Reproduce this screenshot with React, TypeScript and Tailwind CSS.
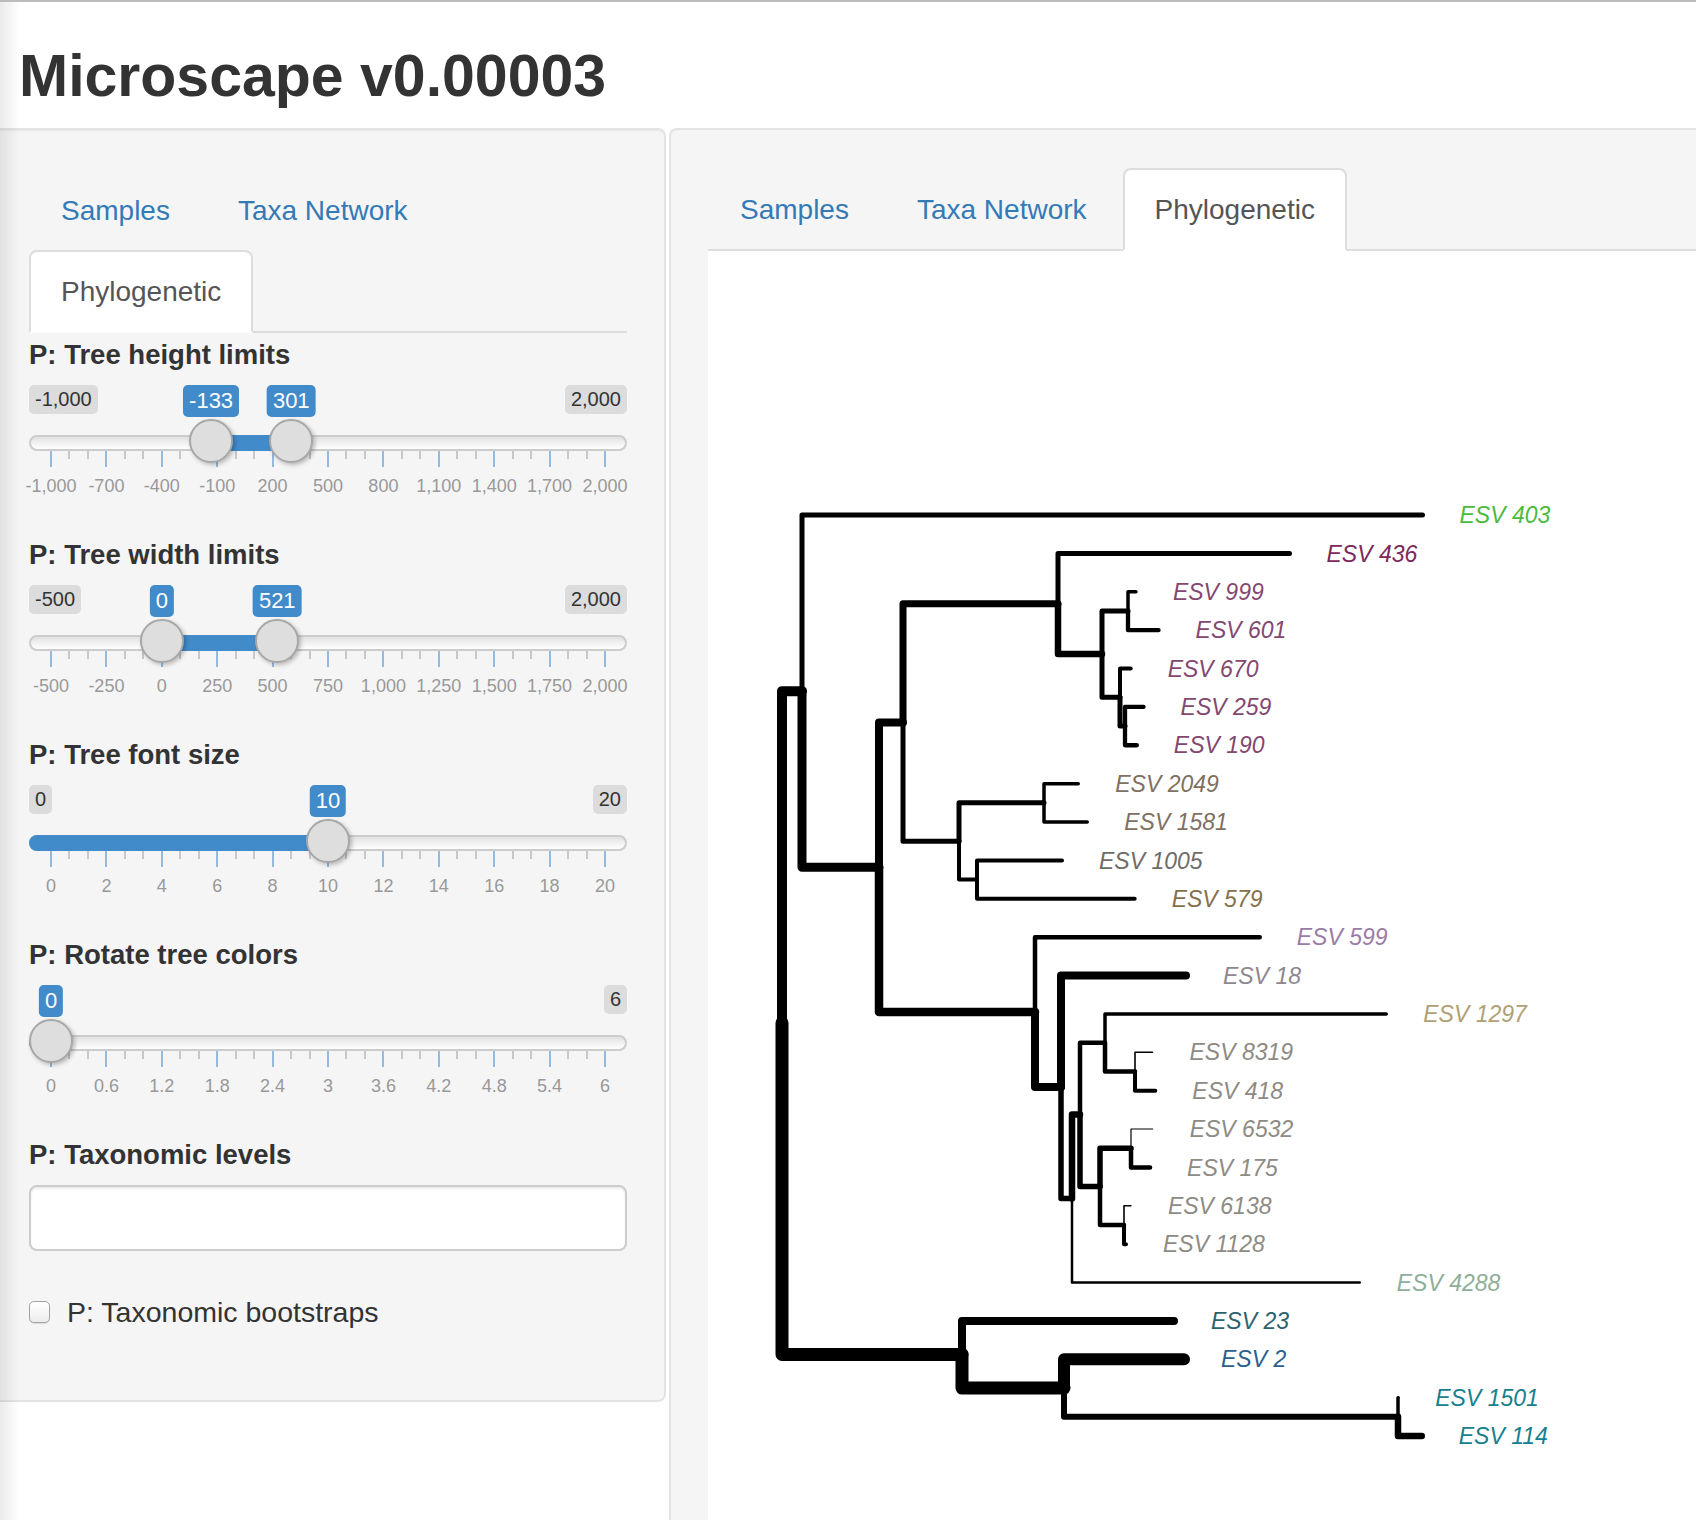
import React from 'react';

// ---------- tree data (page coordinates) ----------
type TNode = { x: number; w: number; label?: string; color?: string; kids?: TNode[]; y?: number };

const tip = (label: string, x: number, w: number, color: string): TNode => ({ label, x, w, color });
const node = (x: number, w: number, a: TNode, b: TNode): TNode => ({ x, w, kids: [a, b] });

const GREEN = '#4cbb3c';
const PLUM = '#7b2a5b';
const MAUVE = '#834770';
const BROWN = '#80705f';
const GREY = '#6f6c68';
const OLIVE = '#86704a';
const LILAC = '#9b7ca6';
const ASH = '#8e878f';
const TAN = '#b0a073';
const WARM = '#8e8a84';
const SAGE = '#8eaf99';
const TEAL = '#2c6270';
const BLUE = '#2c5f8c';
const CYAN = '#16808f';

const tree: TNode = {
  x: 782,
  w: 0,
  kids: [
    node(802, 10, tip('ESV 403', 1425, 5, GREEN),
      node(879, 9,
        node(903, 8,
          node(1058, 7, tip('ESV 436', 1292, 5, PLUM),
            node(1102, 6.5,
              node(1128, 5, tip('ESV 999', 1137.7, 3.5, MAUVE), tip('ESV 601', 1160.7, 4.3, MAUVE)),
              node(1120, 5, tip('ESV 670', 1132.7, 4, MAUVE),
                node(1125, 5, tip('ESV 259', 1145.7, 4.3, MAUVE), tip('ESV 190', 1139, 4.3, MAUVE))))),
          node(959, 5,
            node(1044, 5, tip('ESV 2049', 1080, 3.5, BROWN), tip('ESV 1581', 1089, 3.5, BROWN)),
            node(977, 4, tip('ESV 1005', 1064, 4, GREY), tip('ESV 579', 1136.7, 4, OLIVE)))),
        node(1035, 8.5, tip('ESV 599', 1262, 4.5, LILAC),
          node(1061, 8, tip('ESV 18', 1190, 8, ASH),
            node(1072, 5.5,
              node(1080, 6.5,
                node(1105, 4.5, tip('ESV 1297', 1388, 3.5, TAN),
                  node(1135, 4.5, tip('ESV 8319', 1153.3, 1.6, WARM), tip('ESV 418', 1157.3, 4, WARM))),
                node(1100, 5.5,
                  node(1131, 5.5, tip('ESV 6532', 1153.3, 1.2, WARM), tip('ESV 175', 1152.3, 4.5, WARM)),
                  node(1124, 4.5, tip('ESV 6138', 1131.7, 1.6, WARM), tip('ESV 1128', 1128, 4, WARM)))),
              tip('ESV 4288', 1361, 2.5, SAGE)))))),
    node(962, 13, tip('ESV 23', 1178, 8, TEAL),
      node(1064, 13, tip('ESV 2', 1190, 12, BLUE),
        node(1398, 6, tip('ESV 1501', 1400, 3.5, CYAN), tip('ESV 114', 1425, 6.5, CYAN)))),
  ],
};

// tips are evenly spaced, internal nodes sit halfway between their children
let tipIndex = 0;
const placeY = (n: TNode): number => {
  if (!n.kids) {
    n.y = 515 + 38.375 * tipIndex++;
  } else {
    const ys = n.kids.map(placeY);
    n.y = (ys[0] + ys[ys.length - 1]) / 2;
  }
  return n.y;
};
placeY(tree);

type Edge = { d: string; w: number };
type Lbl = { text: string; x: number; y: number; color: string };
const edges: Edge[] = [];
const labels: Lbl[] = [];
const walk = (n: TNode) => {
  n.kids?.forEach((c) => {
    const end = c.kids ? c.x : c.x - c.w / 2;
    edges.push({ d: `M ${n.x} ${n.y} V ${c.y} H ${end}`, w: c.w });
    if (c.label) labels.push({ text: c.label, x: end + 37, y: (c.y as number) + 8.2, color: c.color as string });
    walk(c);
  });
};
walk(tree);

const PhyloTree = () => (
  <svg width={988} height={1269} viewBox="708 251 988 1269" className="block">
    {edges.map((e, i) => (
      <path key={i} d={e.d} stroke="#000" strokeWidth={e.w} fill="none" strokeLinecap="round" strokeLinejoin="round" />
    ))}
    {labels.map((l) => (
      <text
        key={l.text}
        x={l.x}
        y={l.y}
        fill={l.color}
        fontSize={23}
        fontStyle="italic"
        fontFamily="'Liberation Sans', Arial, sans-serif"
      >
        {l.text}
      </text>
    ))}
  </svg>
);

// ---------- widgets ----------
const Tabs = ({ active }: { active: string }) => (
  <ul className="flex flex-wrap border-b-2 border-[#dddddd]">
    {['Samples', 'Taxa Network', 'Phylogenetic'].map((t) => (
      <li key={t} className="-mb-[2px] mr-[4px]">
        <a
          className={
            t === active
              ? 'flex h-[83px] items-center rounded-t-[8px] border-2 border-[#dddddd] border-b-transparent bg-white px-[30px] text-[28px] text-[#555555]'
              : 'flex h-[83px] items-center rounded-t-[8px] border-2 border-transparent px-[30px] text-[28px] text-[#337ab7]'
          }
        >
          {t}
        </a>
      </li>
    ))}
  </ul>
);

const W = 598;
const HANDLE = 44;

type SliderProps = { min: number; max: number; vals: number[]; grid: string[]; fmt?: (v: number) => string };

const Slider = ({ min, max, vals, grid, fmt = (v) => v.toLocaleString('en-US') }: SliderProps) => {
  const pos = (v: number) => HANDLE / 2 + ((v - min) / (max - min)) * (W - HANDLE);
  const centers = vals.map(pos);
  const barLeft = vals.length === 1 ? 0 : centers[0];
  const barRight = vals.length === 1 ? centers[0] : centers[1];
  const hideMin = vals.length === 1 && vals[0] === min;
  const majors = grid.map((_, i) => HANDLE / 2 + (i / (grid.length - 1)) * (W - HANDLE));
  const minors: number[] = [];
  for (let i = 0; i < majors.length - 1; i++) {
    const step = (majors[i + 1] - majors[i]) / 3;
    minors.push(majors[i] + step, majors[i] + 2 * step);
  }

  return (
    <div className="relative h-[150px] w-[598px]">
      {!hideMin && (
        <span className="absolute left-0 top-0 rounded-[5px] bg-black/10 px-[6px] py-[2px] text-[20px] leading-[25px] text-[#333333]">
          {fmt(min)}
        </span>
      )}
      <span className="absolute right-0 top-0 rounded-[5px] bg-black/10 px-[6px] py-[2px] text-[20px] leading-[25px] text-[#333333]">
        {fmt(max)}
      </span>

      <div className="absolute left-0 right-0 top-[50px] h-[16px] rounded-full border-2 border-[#cccccc] bg-linear-to-b from-[#e2e2e2] to-white" />
      <div
        className="absolute top-[50px] h-[16px] rounded-l-full bg-[#428bca]"
        style={{ left: barLeft, width: barRight - barLeft }}
      />

      {minors.map((x, i) => (
        <span key={'m' + i} className="absolute top-[66px] h-[8px] w-[2px] bg-[#c8c8c8]" style={{ left: x - 1 }} />
      ))}
      {majors.map((x, i) => (
        <span key={'M' + i} className="absolute top-[66px] h-[16px] w-[2px] bg-[#95badf]" style={{ left: x - 1 }} />
      ))}
      {grid.map((g, i) => (
        <span
          key={g + i}
          className="absolute top-[91px] -translate-x-1/2 whitespace-nowrap text-[18px] leading-[21px] text-[#999999]"
          style={{ left: majors[i] }}
        >
          {g}
        </span>
      ))}

      {centers.map((c, i) => (
        <React.Fragment key={i}>
          <span
            className="absolute top-0 -translate-x-1/2 rounded-[5px] bg-[#428bca] px-[6px] py-[2px] text-[22px] leading-[28px] text-white"
            style={{ left: c }}
          >
            {fmt(vals[i])}
          </span>
          <span
            className="absolute top-[34px] h-[44px] w-[44px] rounded-full border-2 border-[#a8a8a8] bg-[#dedede] shadow-[2px_2px_4px_rgba(0,0,0,0.25)]"
            style={{ left: c - HANDLE / 2 }}
          />
        </React.Fragment>
      ))}
    </div>
  );
};

const Group = ({ title, children }: { title: string; children: React.ReactNode }) => (
  <div>
    <div className="mb-[10px] text-[27.5px] font-bold leading-[40px] text-[#333333]">{title}</div>
    {children}
  </div>
);

export default function App() {
  return (
    <div className="relative h-[1520px] w-[1696px] overflow-hidden border-t-2 border-[#bcbcbc] bg-white font-['Liberation_Sans',Arial,sans-serif] text-[#333333]">
      <h1 className="mb-[19px] pl-[19px] pt-[41px] text-[59px] font-bold leading-[66px] text-[#333333]">
        Microscape v0.00003
      </h1>

      <div className="flex items-start gap-[3px]">
        {/* sidebar well */}
        <div className="w-[666px] shrink-0 rounded-r-[8px] border-y-2 border-r-2 border-[#e3e3e3] bg-[#f5f5f5] pb-[38px] pl-[29px] pr-[37px] pt-[39px] shadow-[inset_0_1px_1px_rgba(0,0,0,0.05)]">
          <Tabs active="Phylogenetic" />
          <div className="pt-[2px]">
            <Group title="P: Tree height limits">
              <Slider
                min={-1000}
                max={2000}
                vals={[-133, 301]}
                grid={['-1,000', '-700', '-400', '-100', '200', '500', '800', '1,100', '1,400', '1,700', '2,000']}
              />
            </Group>
            <Group title="P: Tree width limits">
              <Slider
                min={-500}
                max={2000}
                vals={[0, 521]}
                grid={['-500', '-250', '0', '250', '500', '750', '1,000', '1,250', '1,500', '1,750', '2,000']}
              />
            </Group>
            <Group title="P: Tree font size">
              <Slider min={0} max={20} vals={[10]} grid={['0', '2', '4', '6', '8', '10', '12', '14', '16', '18', '20']} />
            </Group>
            <Group title="P: Rotate tree colors">
              <Slider
                min={0}
                max={6}
                vals={[0]}
                grid={['0', '0.6', '1.2', '1.8', '2.4', '3', '3.6', '4.2', '4.8', '5.4', '6']}
              />
            </Group>
            <Group title="P: Taxonomic levels">
              <div className="h-[66px] w-full rounded-[8px] border-2 border-[#cccccc] bg-white shadow-[inset_0_2px_2px_rgba(0,0,0,0.075)]" />
            </Group>
            <label className="mb-[30px] mt-[41px] flex h-[40px] items-center gap-[17px] text-[28.5px] text-[#333333]">
              <span className="h-[22px] w-[21px] rounded-[5px] border-[1.5px] border-[#a3a3a3] bg-linear-to-b from-white to-[#ececec] shadow-[0_1px_1px_rgba(0,0,0,0.1)]" />
              P: Taxonomic bootstraps
            </label>
          </div>
        </div>

        {/* main panel */}
        <div className="h-[1420px] flex-1 rounded-tl-[8px] border-l-2 border-t-2 border-[#e3e3e3] bg-[#f5f5f5] pl-[37px] pt-[38px]">
          <Tabs active="Phylogenetic" />
          <div className="h-[1300px] bg-white">
            <PhyloTree />
          </div>
        </div>
      </div>

      {/* window edge shadow */}
      <div className="pointer-events-none absolute left-0 top-0 h-full w-[20px] bg-linear-to-r from-black/[0.08] to-transparent" />
    </div>
  );
}
